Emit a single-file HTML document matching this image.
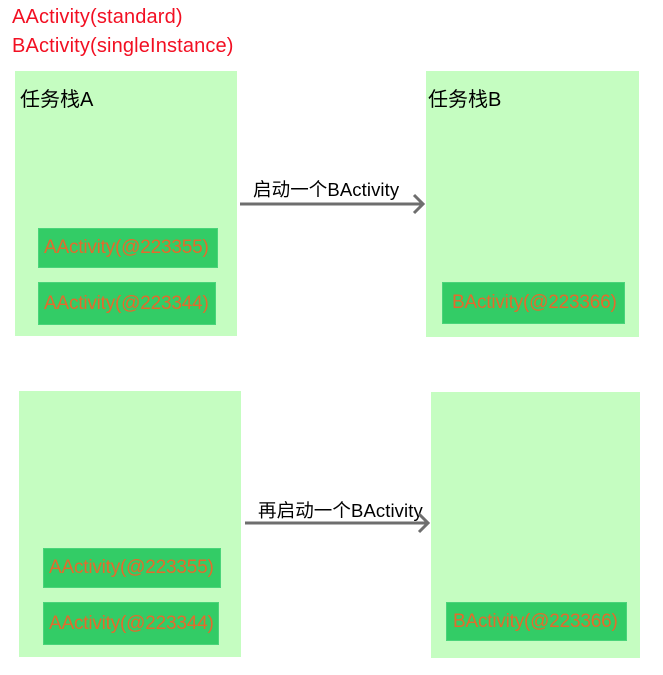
<!DOCTYPE html>
<html><head><meta charset="utf-8"><style>
body{margin:0;width:663px;height:675px;background:#fff;position:relative;overflow:hidden;font-family:"Liberation Sans","Noto Sans CJK SC",sans-serif}
.a{position:absolute;white-space:nowrap}
.p{position:absolute;background:#c5fdc1}
.g{position:absolute;background:#33cc66;border:1px solid #4ad47a;box-sizing:border-box;color:#e46a2c;font-size:19px;letter-spacing:-0.2px;display:flex;align-items:center;padding-left:5px;white-space:nowrap}
.r{color:#f20f22;font-size:20px;letter-spacing:0.15px}
.t{font-size:20px;color:#000}
.l{font-size:18.5px;color:#000;letter-spacing:0.1px}
</style></head><body>
<div class="a r" style="left:12px;top:6px">AActivity(standard)</div>
<div class="a r" style="left:12px;top:35px">BActivity(singleInstance)</div>

<div class="p" style="left:15px;top:71px;width:222px;height:265px"></div>
<div class="p" style="left:426px;top:71px;width:213px;height:266px"></div>
<div class="p" style="left:19px;top:391px;width:222px;height:266px"></div>
<div class="p" style="left:431px;top:392px;width:209px;height:266px"></div>

<div class="a t" style="left:20px;top:83px">任务栈A</div>
<div class="a t" style="left:428px;top:83px">任务栈B</div>

<div class="g" style="left:38px;top:228px;width:180px;height:40px">AActivity(@223355)</div>
<div class="g" style="left:38px;top:282px;width:178px;height:43px">AActivity(@223344)</div>
<div class="g" style="left:442px;top:282px;width:183px;height:42px;padding-left:9px">BActivity(@223366)</div>
<div class="g" style="left:43px;top:548px;width:178px;height:40px">AActivity(@223355)</div>
<div class="g" style="left:43px;top:602px;width:176px;height:43px">AActivity(@223344)</div>
<div class="g" style="left:446px;top:602px;width:181px;height:39px;padding-left:6px">BActivity(@223366)</div>

<div class="a l" style="left:253px;top:176px">启动一个BActivity</div>
<div class="a l" style="left:258px;top:497px">再启动一个BActivity</div>

<svg class="a" style="left:0;top:0" width="663" height="675">
<g stroke="#6e6e6e" stroke-width="3" fill="none">
<line x1="240" y1="204" x2="423" y2="204"/>
<polyline points="414,195 423,204 414,213"/>
<line x1="245" y1="523" x2="428" y2="523"/>
<polyline points="419,514 428,523 419,532"/>
</g></svg>
</body></html>
